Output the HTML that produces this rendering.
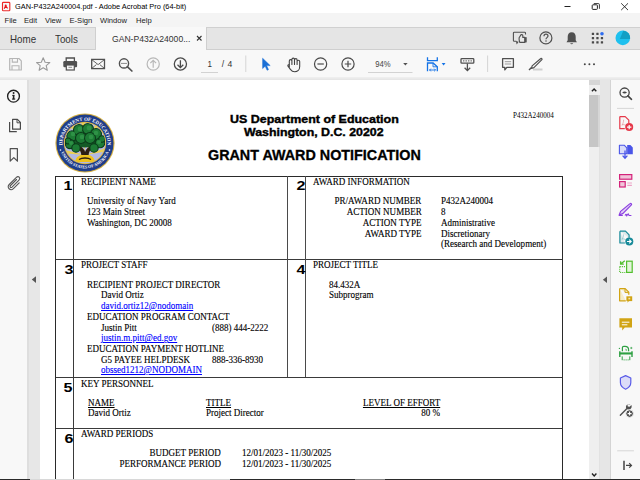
<!DOCTYPE html>
<html><head><meta charset="utf-8">
<style>
*{box-sizing:border-box}
html,body{margin:0;padding:0}
body{width:640px;height:480px;position:relative;overflow:hidden;background:#fff;font-family:"Liberation Sans",sans-serif;color:#222}
.a{position:absolute}
.t{position:absolute;white-space:pre;line-height:1}
.ui{font-family:"Liberation Sans",sans-serif;color:#2c2c2c}
.s{font-family:"Liberation Serif",serif;font-size:9.6px;color:#000;-webkit-text-stroke:0.12px currentColor;position:absolute;white-space:pre;line-height:1}
.num{font-family:"Liberation Sans",sans-serif;font-weight:bold;font-size:13.4px;transform-origin:100% 0;transform:scaleX(1.2);color:#000;position:absolute;line-height:1}
.lk{color:#0000ff;text-decoration:underline}
.ul{text-decoration:underline}
svg{position:absolute;overflow:visible}
</style></head>
<body>
<!-- title bar -->
<div class="a" style="left:0;top:0;width:640px;height:13px;background:#fff"></div>
<svg style="left:0;top:0" width="14" height="13"><rect x="2.5" y="2.4" width="7.3" height="8.3" rx="0.8" fill="#f6fbfb" stroke="#ec2a2a" stroke-width="1.15"/><circle cx="5.7" cy="5.5" r="1" fill="#e8141a"/><path d="M5.7 5.6L4.2 8.7 M5.8 6.2L7.6 8.3 M4.6 7.5h2.7" stroke="#e8141a" stroke-width="1.1" fill="none"/></svg>
<div class="t ui" style="left:15px;top:3px;font-size:7.4px;color:#000">GAN-P432A240004.pdf - Adobe Acrobat Pro (64-bit)</div>
<!-- menu bar -->
<div class="a" style="left:0;top:13px;width:640px;height:14px;background:#f4f4f4"></div>
<div class="t ui" style="left:4.5px;top:17px;font-size:7.6px;color:#1a1a1a">File</div>
<div class="t ui" style="left:24px;top:17px;font-size:7.6px;color:#1a1a1a">Edit</div>
<div class="t ui" style="left:45px;top:17px;font-size:7.6px;color:#1a1a1a">View</div>
<div class="t ui" style="left:69.5px;top:17px;font-size:7.6px;color:#1a1a1a">E-Sign</div>
<div class="t ui" style="left:100px;top:17px;font-size:7.6px;color:#1a1a1a">Window</div>
<div class="t ui" style="left:136px;top:17px;font-size:7.6px;color:#1a1a1a">Help</div>
<!-- tab bar -->
<div class="a" style="left:0;top:27px;width:640px;height:23px;background:#e5e5e5;border-top:1px solid #d0d0d0;border-bottom:1px solid #cfcfcf"></div>
<div class="a" style="left:95px;top:27px;width:112px;height:23px;background:#f8f8f8;border-left:1px solid #cfcfcf;border-right:1px solid #cfcfcf"></div>
<div class="t ui" style="left:10px;top:33.6px;font-size:9.8px;color:#333;transform-origin:0 0;transform:scaleY(1.14)">Home</div>
<div class="t ui" style="left:55px;top:33.6px;font-size:9.8px;color:#333;transform-origin:0 0;transform:scaleY(1.14)">Tools</div>
<div class="t ui" style="left:112px;top:35px;font-size:8.6px;color:#333">GAN-P432A24000...</div>
<svg style="left:0;top:0" width="640" height="50"><path d="M197 36l4.5 4.5M201.5 36l-4.5 4.5" stroke="#333" stroke-width="1.1"/></svg>
<!-- toolbar -->
<div class="a" style="left:0;top:50px;width:640px;height:29px;background:#f8f8f8"></div>
<div class="a" style="left:0;top:77px;width:640px;height:3px;background:linear-gradient(#f0f0f0,#e4e4e4)"></div>
<div class="t ui" style="left:207.6px;top:59.8px;font-size:8px;color:#333;transform-origin:0 0;transform:scaleY(1.15)">1</div>
<div class="t ui" style="left:221.8px;top:60.2px;font-size:8.6px;color:#333;word-spacing:1px">/ 4</div>
<div class="t ui" style="left:375.3px;top:59.6px;font-size:7.7px;color:#444;transform-origin:0 0;transform:scaleY(1.18)">94%</div>
<!-- content area -->
<div class="a" style="left:0;top:80px;width:27px;height:400px;background:#f8f8f8"></div>
<div class="a" style="left:27px;top:80px;width:13px;height:400px;background:#e7e7e7;border-left:2px solid #dedede"></div>
<div class="a" style="left:40px;top:80px;width:549px;height:400px;background:#fff"></div>
<!-- seal -->
<svg style="left:55px;top:112.5px" width="60" height="60" viewBox="-30 -30 60 60">
<defs>
<path id="arcT" d="M-22.3 4 A22.6 22.6 0 1 1 22.3 4"/>
<path id="arcB" d="M-25 5 A25.5 25.5 0 0 0 25 5"/>
<clipPath id="inner"><circle r="20.2"/></clipPath>
</defs>
<circle r="29.6" fill="#d6b042"/>
<circle r="28.5" fill="#1f3d8a"/>
<circle r="21.2" fill="#e0b83c"/>
<circle r="20.3" fill="#b3b9e2"/>
<g clip-path="url(#inner)">
<path d="M0 12 L-22 -7 L-21 -3 Z M0 12 L-15 -19 L-12 -20 Z M0 12 L-4 -24 L0 -24 Z M0 12 L11 -21 L14 -20 Z M0 12 L21 -9 L22 -5 Z M0 12 L-24 6 L-23 10 Z M0 12 L24 4 L24 8 Z" fill="#eccf52"/>
<path d="M-4 16 C-3 11 -4 7 -9 3 L-6 2 C-2 5 0 7 0 9 C1 6 3 4 7 2 L9 3 C4 7 3 11 4 16 Z" fill="#2e1d12"/>
<ellipse cx="0" cy="-5" rx="15" ry="9.5" fill="#145a26"/>
<g fill="#1d7b35" stroke="#0b3a1a" stroke-width="1.1">
<circle cx="-13" cy="-7" r="5.2"/><circle cx="-6" cy="-13" r="5.5"/><circle cx="3" cy="-14" r="5.5"/><circle cx="11" cy="-9" r="5.5"/>
<circle cx="-15" cy="1" r="4.6"/><circle cx="15" cy="0" r="4.8"/><circle cx="-9" cy="5" r="4.2"/><circle cx="9" cy="5" r="4.2"/>
<circle cx="-4" cy="-5" r="5.5"/><circle cx="5" cy="-5" r="5.5"/><circle cx="-17" cy="-2" r="3"/><circle cx="17" cy="-4" r="3.2"/>
</g>
<g fill="#2e9246"><circle cx="-12" cy="-9" r="2.2"/><circle cx="-5" cy="-14" r="2.4"/><circle cx="4" cy="-15" r="2.4"/><circle cx="11" cy="-10" r="2.3"/><circle cx="-14" cy="0" r="2"/><circle cx="14" cy="-1" r="2"/><circle cx="-3" cy="-6" r="2.3"/><circle cx="6" cy="-6" r="2.3"/></g>
<path d="M-10 19 C-9 14 -6 12 -3 12 L3 12 C6 12 9 14 10 19 Z" fill="#f0c21c"/>
<path d="M-6 16.5 C-3 14.5 3 14.5 6 16.5" stroke="#2e1d12" stroke-width="1.3" fill="none"/>
</g>
<text font-family="Liberation Serif" font-size="5" font-weight="bold" fill="#fff"><textPath href="#arcT" startOffset="50%" text-anchor="middle">DEPARTMENT OF EDUCATION</textPath></text>
<text font-family="Liberation Serif" font-size="4.2" font-weight="bold" fill="#fff"><textPath href="#arcB" startOffset="50%" text-anchor="middle">UNITED STATES OF AMERICA</textPath></text>
<circle cx="-24.5" cy="7" r="0.8" fill="#fff"/><circle cx="24.5" cy="7" r="0.8" fill="#fff"/>
</svg>
<!-- header -->
<div class="t" style="left:230px;top:114.5px;font-size:10px;font-weight:bold;color:#000;-webkit-text-stroke:0.35px #000;transform-origin:0 0;transform:scaleX(1.245)">US Department of Education</div>
<div class="t" style="left:244px;top:127.5px;font-size:10px;font-weight:bold;color:#000;-webkit-text-stroke:0.35px #000;transform-origin:0 0;transform:scaleX(1.235)">Washington, D.C. 20202</div>
<div class="t" style="left:208px;top:147.8px;font-size:14.35px;font-weight:bold;color:#000;-webkit-text-stroke:0.3px #000">GRANT AWARD NOTIFICATION</div>
<div class="t" style="left:512.5px;top:111.5px;font-size:7.6px;font-family:'Liberation Serif',serif;color:#000;transform-origin:0 0;transform:scaleX(0.93)">P432A240004</div>
<!-- table lines -->
<div class="a" style="left:55px;top:176px;width:508px;height:1px;background:#2a2a2a"></div>
<div class="a" style="left:55px;top:259px;width:508px;height:1px;background:#3a3a3a"></div>
<div class="a" style="left:55px;top:377px;width:508px;height:1px;background:#3a3a3a"></div>
<div class="a" style="left:55px;top:428px;width:508px;height:1px;background:#3a3a3a"></div>
<div class="a" style="left:55px;top:176px;width:1px;height:304px;background:#2a2a2a"></div>
<div class="a" style="left:73px;top:176px;width:1px;height:304px;background:#3a3a3a"></div>
<div class="a" style="left:287px;top:176px;width:1px;height:201px;background:#4a4a4a"></div>
<div class="a" style="left:305px;top:176px;width:1px;height:201px;background:#4a4a4a"></div>
<div class="a" style="left:562px;top:176px;width:1px;height:304px;background:#2a2a2a"></div>
<!--DOC-->
<div class="s" style="left:80.6px;top:177.2px;transform-origin:0 0;transform:scaleX(0.94)">RECIPIENT NAME</div>
<div class="s" style="left:87.4px;top:196.3px;transform-origin:0 0;transform:scaleX(0.94)">University of Navy Yard</div>
<div class="s" style="left:87.4px;top:207.2px;transform-origin:0 0;transform:scaleX(0.94)">123 Main Street</div>
<div class="s" style="left:87.4px;top:217.5px;transform-origin:0 0;transform:scaleX(0.94)">Washington, DC 20008</div>
<div class="s" style="left:312.5px;top:177.2px;transform-origin:0 0;transform:scaleX(0.94)">AWARD INFORMATION</div>
<div class="s" style="right:218.6px;top:196.3px;transform-origin:100% 0;transform:scaleX(0.94)">PR/AWARD NUMBER</div>
<div class="s" style="right:218.6px;top:207.2px;transform-origin:100% 0;transform:scaleX(0.94)">ACTION NUMBER</div>
<div class="s" style="right:218.6px;top:218.2px;transform-origin:100% 0;transform:scaleX(0.94)">ACTION TYPE</div>
<div class="s" style="right:218.6px;top:229.1px;transform-origin:100% 0;transform:scaleX(0.94)">AWARD TYPE</div>
<div class="s" style="left:441.4px;top:196.0px;transform-origin:0 0;transform:scaleX(0.94)">P432A240004</div>
<div class="s" style="left:441.4px;top:207.2px;transform-origin:0 0;transform:scaleX(0.94)">8</div>
<div class="s" style="left:441.4px;top:217.9px;transform-origin:0 0;transform:scaleX(0.94)">Administrative</div>
<div class="s" style="left:441.4px;top:228.7px;transform-origin:0 0;transform:scaleX(0.94)">Discretionary</div>
<div class="s" style="left:441.4px;top:238.7px;transform-origin:0 0;transform:scaleX(0.94)">(Research and Development)</div>
<div class="s" style="left:80.6px;top:260.1px;transform-origin:0 0;transform:scaleX(0.94)">PROJECT STAFF</div>
<div class="s" style="left:87.4px;top:279.8px;transform-origin:0 0;transform:scaleX(0.94)">RECIPIENT PROJECT DIRECTOR</div>
<div class="s" style="left:101.0px;top:290.1px;transform-origin:0 0;transform:scaleX(0.94)">David Ortiz</div>
<div class="s lk" style="left:101.0px;top:301.0px;transform-origin:0 0;transform:scaleX(0.94)">david.ortiz12@nodomain</div>
<div class="s" style="left:86.9px;top:312.1px;transform-origin:0 0;transform:scaleX(0.94)">EDUCATION PROGRAM CONTACT</div>
<div class="s" style="left:100.7px;top:322.6px;transform-origin:0 0;transform:scaleX(0.94)">Justin Pitt</div>
<div class="s" style="left:212.2px;top:322.6px;transform-origin:0 0;transform:scaleX(0.94)">(888) 444-2222</div>
<div class="s lk" style="left:100.7px;top:333.4px;transform-origin:0 0;transform:scaleX(0.94)">justin.m.pitt@ed.gov</div>
<div class="s" style="left:86.9px;top:344.2px;transform-origin:0 0;transform:scaleX(0.94)">EDUCATION PAYMENT HOTLINE</div>
<div class="s" style="left:100.7px;top:355.4px;transform-origin:0 0;transform:scaleX(0.94)">G5 PAYEE HELPDESK</div>
<div class="s" style="left:212.2px;top:355.4px;transform-origin:0 0;transform:scaleX(0.94)">888-336-8930</div>
<div class="s lk" style="left:100.7px;top:365.2px;transform-origin:0 0;transform:scaleX(0.94)">obssed1212@NODOMAIN</div>
<div class="s" style="left:312.5px;top:260.1px;transform-origin:0 0;transform:scaleX(0.94)">PROJECT TITLE</div>
<div class="s" style="left:328.8px;top:280.1px;transform-origin:0 0;transform:scaleX(0.94)">84.432A</div>
<div class="s" style="left:328.8px;top:289.9px;transform-origin:0 0;transform:scaleX(0.94)">Subprogram</div>
<div class="s" style="left:81.2px;top:378.6px;transform-origin:0 0;transform:scaleX(0.94)">KEY PERSONNEL</div>
<div class="s ul" style="left:88.1px;top:397.8px;transform-origin:0 0;transform:scaleX(0.94)">NAME</div>
<div class="s" style="left:88.1px;top:408.1px;transform-origin:0 0;transform:scaleX(0.94)">David Ortiz</div>
<div class="s ul" style="left:205.6px;top:397.8px;transform-origin:0 0;transform:scaleX(0.94)">TITLE</div>
<div class="s" style="left:205.6px;top:408.1px;transform-origin:0 0;transform:scaleX(0.94)">Project Director</div>
<div class="s ul" style="right:199.4px;top:397.8px;transform-origin:100% 0;transform:scaleX(0.94)">LEVEL OF EFFORT</div>
<div class="s" style="right:200.4px;top:408.1px;transform-origin:100% 0;transform:scaleX(0.94)">80 %</div>
<div class="s" style="left:81.2px;top:428.7px;transform-origin:0 0;transform:scaleX(0.94)">AWARD PERIODS</div>
<div class="s" style="right:419.4px;top:448.3px;transform-origin:100% 0;transform:scaleX(0.94)">BUDGET PERIOD</div>
<div class="s" style="right:419.4px;top:458.6px;transform-origin:100% 0;transform:scaleX(0.94)">PERFORMANCE PERIOD</div>
<div class="s" style="left:241.7px;top:448.3px;transform-origin:0 0;transform:scaleX(0.94)">12/01/2023 - 11/30/2025</div>
<div class="s" style="left:241.7px;top:458.6px;transform-origin:0 0;transform:scaleX(0.94)">12/01/2023 - 11/30/2025</div>
<div class="num" style="right:567.9px;top:179.0px">1</div>
<div class="num" style="right:334.6px;top:179.0px">2</div>
<div class="num" style="right:566.5px;top:263.0px">3</div>
<div class="num" style="right:334.3px;top:262.5px">4</div>
<div class="num" style="right:567.5px;top:381.2px">5</div>
<div class="num" style="right:567.0px;top:431.6px">6</div>
<!--/DOC-->
<!-- scrollbar -->
<div class="a" style="left:589px;top:80px;width:11px;height:400px;background:#efefef"></div>
<div class="a" style="left:589px;top:80px;width:11px;height:4.7px;background:#d6d6d6"></div>
<div class="a" style="left:589px;top:95px;width:9px;height:52px;background:#c6c6c6"></div>
<div class="a" style="left:598px;top:95px;width:2px;height:52px;background:#d6d6d6"></div>
<div class="a" style="left:599px;top:147px;width:1px;height:333px;background:#e2e2e2"></div>
<div class="a" style="left:600px;top:80px;width:11px;height:400px;background:#e6e6e6;border-right:1px solid #d4d4d4"></div>
<div class="a" style="left:611px;top:80px;width:29px;height:400px;background:#f8f8f8"></div>
<div class="a" style="left:0;top:479px;width:640px;height:1px;background:#2a2a2a"></div>
<div class="a" style="left:30px;top:479px;width:200px;height:1px;background:#d8d8d8"></div>
<div class="a" style="left:355px;top:479px;width:30px;height:1px;background:#888"></div>
<!-- icons -->
<svg style="left:0;top:0" width="640" height="480">
<!-- window controls -->
<path d="M564.5 6.5h6" stroke="#222" stroke-width="1"/>
<rect x="592.2" y="4.8" width="5.2" height="4.6" rx="0.8" fill="none" stroke="#222" stroke-width="1"/>
<path d="M593.8 3.6h4.6a1 1 0 0 1 1 1v4.2" fill="none" stroke="#222" stroke-width="0.9"/>
<path d="M621.2 3.3l6.8 6.8M628 3.3l-6.8 6.8" stroke="#222" stroke-width="0.9"/>
<!-- tab bar right -->
<path d="M516.4 41.3h-2.1c-0.5 0-0.9-0.4-0.9-0.9v-7.3c0-0.5 0.4-0.9 0.9-0.9h10.3c0.5 0 0.9 0.4 0.9 0.9v1.4" fill="none" stroke="#505050" stroke-width="1.1"/>
<path d="M515.8 41l0.9 3.6 2-2.8z" fill="#505050"/>
<path d="M519.1 37.7l2-3.1c0.8-0.3 1.7 0.3 1.7 1.1v1.7h2v5h-5.1c-0.4-1.5-0.8-3.1-0.6-4.7z" fill="#e8e8e8" stroke="#505050" stroke-width="1.1" stroke-linejoin="round"/>
<rect x="524.5" y="37.2" width="2.2" height="5.2" fill="#505050"/>
<circle cx="545.9" cy="37.9" r="6" fill="none" stroke="#505050" stroke-width="1.2"/>
<path d="M544 36.2c0-1.2 0.9-2 2-2s2 0.8 2 1.9c0 1.5-2 1.6-2 3.1" fill="none" stroke="#505050" stroke-width="1.2"/>
<circle cx="546" cy="41" r="0.75" fill="#505050"/>
<path d="M571.7 32.2c-2.6 0-4 2-4 4.5v3.5l-1.2 2h10.4l-1.2-2v-3.5c0-2.5-1.4-4.5-4-4.5z" fill="#505050"/>
<path d="M570.2 43.2a1.6 1.6 0 0 0 3 0z" fill="#505050"/>
<g fill="#4a4a4a"><rect x="591.8" y="32.7" width="2.3" height="2.3" rx="0.3"/><rect x="596.3" y="32.7" width="2.3" height="2.3" rx="0.3"/>
<rect x="591.8" y="37" width="2.3" height="2.3" rx="0.3"/><rect x="596.3" y="37" width="2.3" height="2.3" rx="0.3"/><rect x="600.8" y="37" width="2.3" height="2.3" rx="0.3"/>
<rect x="591.8" y="41.3" width="2.3" height="2.3" rx="0.3"/><rect x="596.3" y="41.3" width="2.3" height="2.3" rx="0.3"/><rect x="600.8" y="41.3" width="2.3" height="2.3" rx="0.3"/></g>
<circle cx="602" cy="33.8" r="1.8" fill="#2d6cf0"/>
<circle cx="622.8" cy="37.9" r="7.3" fill="#1ec0ee"/>
<path d="M619.8 38.9L623.3 30.7A7.3 7.3 0 0 1 630.1 38.9Z" fill="#129fc4"/>
<!-- toolbar -->
<path d="M9.7 58.5h9.2l2.4 2.4v9.1h-11.6z" fill="none" stroke="#b5b5b5" stroke-width="1.2" stroke-linejoin="round"/>
<path d="M12.3 58.5v3.6h5.2v-3.6 M12 70v-4.2h7v4.2" fill="none" stroke="#b5b5b5" stroke-width="1.1"/>
<path d="M43.2 57.8l1.9 4.4 4.7 0.4-3.6 3.1 1.1 4.6-4.1-2.5-4.1 2.5 1.1-4.6-3.6-3.1 4.7-0.4z" fill="none" stroke="#9a9a9a" stroke-width="1.1" stroke-linejoin="round"/>
<path d="M66.2 61.2v-3.2h8.2v3.2" fill="none" stroke="#505050" stroke-width="1.3"/>
<rect x="63.3" y="61" width="13.8" height="6.3" rx="1.2" fill="#505050"/>
<rect x="66.3" y="65" width="8" height="5" fill="#f8f8f8" stroke="#505050" stroke-width="1.2"/>
<path d="M68.5 67.3h3.6" stroke="#8a8a8a" stroke-width="1"/>
<rect x="91.7" y="59.4" width="12.8" height="9.2" fill="none" stroke="#505050" stroke-width="1.3"/>
<path d="M92 59.8l6.1 4.8 6.1-4.8 M92 68.2l4.4-3.6 M104.2 68.2l-4.4-3.6" fill="none" stroke="#505050" stroke-width="0.9"/>
<circle cx="124" cy="63.4" r="4.6" fill="none" stroke="#505050" stroke-width="1.4"/>
<path d="M127.3 66.7l4.6 4.3" stroke="#505050" stroke-width="1.7" stroke-linecap="round"/>
<g fill="#505050"><circle cx="122" cy="63.4" r="0.65"/><circle cx="124" cy="63.4" r="0.65"/><circle cx="126" cy="63.4" r="0.65"/></g>
<circle cx="153.2" cy="64" r="6.1" fill="none" stroke="#b8b8b8" stroke-width="1.2"/>
<path d="M153.2 67.8v-7 M150.3 63.2l2.9-2.9 2.9 2.9" fill="none" stroke="#b8b8b8" stroke-width="1.2"/>
<circle cx="180.4" cy="64" r="6.1" fill="none" stroke="#4a4a4a" stroke-width="1.3"/>
<path d="M180.4 60.2v7 M177.5 64.8l2.9 2.9 2.9-2.9" fill="none" stroke="#4a4a4a" stroke-width="1.3"/>
<path d="M201 72.5h17 M368 72.5h44.5" stroke="#c8c8c8" stroke-width="0.8"/>
<path d="M245.8 55.5v16.5 M487.6 55.5v16.5" stroke="#d0d0d0" stroke-width="0.9"/>
<path d="M262.6 58.2v10.4l2.6-2.4 1.9 4.1 1.4-0.7-1.9-4h3.6z" fill="#1a6fd6" stroke="#1a6fd6" stroke-width="0.5" stroke-linejoin="round"/>
<path d="M289.3 67.2V60.9a1.3 1.3 0 0 1 2.6 0V64.5V59.4a1.3 1.3 0 0 1 2.6 0V64.5V59.9a1.3 1.3 0 0 1 2.6 0V64.5V61.6a1.3 1.3 0 0 1 2.6 0V66.6c0 3-2.2 5.2-5 5.2c-2 0-3.2-0.9-4.3-2.4l-2.4-3.2c-0.6-0.9 0.5-1.9 1.3-1.2z" fill="none" stroke="#444" stroke-width="1.1" stroke-linejoin="round"/>
<circle cx="320.6" cy="64" r="6.1" fill="none" stroke="#4a4a4a" stroke-width="1.2"/>
<path d="M317.4 64h6.4" stroke="#4a4a4a" stroke-width="1.2"/>
<circle cx="348" cy="64" r="6.1" fill="none" stroke="#4a4a4a" stroke-width="1.2"/>
<path d="M344.8 64h6.4 M348 60.8v6.4" stroke="#4a4a4a" stroke-width="1.2"/>
<path d="M403.2 63l2.2 2.4 2.2-2.4z" fill="#505050"/>
<path d="M427.5 57.3v3.4h9.8v-3.4" fill="none" stroke="#1473e6" stroke-width="1.3"/>
<path d="M427.5 71.3v-8.3h5.6l4.2 3.8v4.5" fill="none" stroke="#1473e6" stroke-width="1.3"/>
<path d="M433 63v3.8h4.3" fill="none" stroke="#1473e6" stroke-width="0.9"/>
<path d="M429.5 70h6 M430.8 68.7l-1.3 1.3 1.3 1.3 M434.2 68.7l1.3 1.3-1.3 1.3" fill="none" stroke="#1473e6" stroke-width="0.9"/>
<path d="M441.7 63l1.9 2.6 1.9-2.6z" fill="#1473e6"/>
<rect x="461" y="58.6" width="12.8" height="4.6" rx="0.8" fill="none" stroke="#505050" stroke-width="1.3"/>
<path d="M463 60.9h1.4 M465.5 60.9h1.4 M468 60.9h1.4 M470.5 60.9h1.4" stroke="#505050" stroke-width="1"/>
<path d="M467.4 63.5v7 M464.6 67.8l2.8 2.8 2.8-2.8" fill="none" stroke="#505050" stroke-width="1.3"/>
<path d="M502.6 58.7h10.8v8.6h-6.6l-2 2.6v-2.6h-2.2z" fill="none" stroke="#505050" stroke-width="1.3" stroke-linejoin="round"/>
<path d="M504.8 61.7h6.4 M504.8 64h6.4" stroke="#9a9a9a" stroke-width="1"/>
<rect x="533" y="68.5" width="9.5" height="2" fill="#cfcfcf"/>
<path d="M540.8 58.5c0.6-0.6 1.7 0.5 1.1 1.1l-8 8.1-2.4 0.6 0.6-2.4z" fill="none" stroke="#505050" stroke-width="1.2" stroke-linejoin="round"/>
<path d="M531.5 67.5l-2.5 2.4" stroke="#505050" stroke-width="1.4"/>
<g fill="#444"><circle cx="584.8" cy="64.2" r="1"/><circle cx="589.4" cy="64.2" r="1"/><circle cx="594" cy="64.2" r="1"/></g>
<!-- left nav icons -->
<circle cx="13.5" cy="96.2" r="5.9" fill="none" stroke="#222" stroke-width="1.35"/>
<g fill="#222"><rect x="12.8" y="94.9" width="1.6" height="4.4"/><rect x="12" y="98.5" width="3.2" height="1.1"/><rect x="12.2" y="94.9" width="2.2" height="0.9"/><circle cx="13.6" cy="93" r="0.95"/></g>
<path d="M9.6 122v9.6h7.2" fill="none" stroke="#4a4a4a" stroke-width="1.2"/>
<path d="M12.6 119.4h4.8l3 3v6.8h-7.8z" fill="none" stroke="#4a4a4a" stroke-width="1.2" stroke-linejoin="round"/>
<path d="M17 119.6v3.2h3.2" fill="none" stroke="#4a4a4a" stroke-width="1"/>
<path d="M10.2 148.6h7.2v12.6l-3.6-3.6-3.6 3.6z" fill="none" stroke="#505050" stroke-width="1.2" stroke-linejoin="round"/>
<path d="M16.5 181.5l-6 6c-1.2 1.2 0.2 2.8 1.5 1.6l7-7c2-2-0.6-4.8-2.6-2.8l-7.2 7.2c-3 3 1.3 7 4.2 4.1l5.8-5.8" fill="none" stroke="#555" stroke-width="1.1" stroke-linecap="round" transform="translate(0 -2)"/>
<path d="M36 276.3v6.6l-4.2-3.3z" fill="#555"/>
<!-- scrollbar arrows -->
<path d="M591.9 91.3l2.2-2.3 2.2 2.3" fill="none" stroke="#222" stroke-width="1.4"/>
<path d="M592 473.6l2.2 2.3 2.2-2.3" fill="none" stroke="#222" stroke-width="1.4"/>
<path d="M607 276.4v6.7l-4.1-3.4z" fill="#555"/>
<!-- right tool icons -->
<circle cx="624.6" cy="92.6" r="4.6" fill="none" stroke="#444" stroke-width="1.3"/>
<path d="M627.9 95.9l3.6 3.4" stroke="#444" stroke-width="1.6" stroke-linecap="round"/>
<path d="M622.2 92.6q2.4-2 4.8 0q-2.4 2-4.8 0z" fill="#444"/>
<path d="M617 108.4h17" stroke="#d6d6d6" stroke-width="1"/>
<path d="M619.8 116.6h5.4l3.6 3.6v3" fill="none" stroke="#e5394a" stroke-width="1.2" stroke-linejoin="round"/>
<path d="M619.8 116.6v12.1h5" fill="none" stroke="#e5394a" stroke-width="1.2"/>
<path d="M622 125.5c1-1.8 1.6-3.8 1.6-5.8 M621.8 124.6c1.8-0.2 3.4 0.2 4.6 1" fill="none" stroke="#e8a0a6" stroke-width="0.8"/>
<circle cx="629.2" cy="127.1" r="4" fill="#e5394a"/>
<path d="M629.2 124.9v4.4 M627 127.1h4.4" stroke="#fff" stroke-width="1.2"/>
<path d="M619.4 145.2h4.8l2.6 2.6v5.9h-7.4z" fill="#d9dcfa" stroke="#4a55e8" stroke-width="1.1" stroke-linejoin="round"/>
<path d="M627.2 145h3.2l2.4 2.4v6.8h-5.6z" fill="#4a55e8"/>
<path d="M625 150.5v7.5 M622.6 155.6l2.4 2.6 2.4-2.6" fill="none" stroke="#4a55e8" stroke-width="1.3"/>
<rect x="619.6" y="174.6" width="12.2" height="4.6" fill="#f1c4da" stroke="#d4237a" stroke-width="1.2"/>
<rect x="619.6" y="181.6" width="5.6" height="5.4" fill="#f1c4da" stroke="#d4237a" stroke-width="1.2"/>
<path d="M627.3 183h4.6 M627.3 185.4h4.6" stroke="#eba3c6" stroke-width="1.2"/>
<path d="M630 203.6c0.7-0.7 2.1 0.6 1.4 1.3l-8.6 8.7-3.6 1.4 1.4-3.6z" fill="#e0cdf7" stroke="#8b3fe0" stroke-width="1.2" stroke-linejoin="round"/>
<path d="M618.8 215.5h4 M625 215.5c1-1.5 1.6-1.5 1.6 0s1-1.8 1.6-1.8 0 1.8 1.2 1.8h2" fill="none" stroke="#8b3fe0" stroke-width="1.1"/>
<path d="M619.9 231.2h5.6l3.6 3.6v3 M619.9 231.2v11.8h5" fill="#dde8ea" stroke="#178a99" stroke-width="1.2" stroke-linejoin="round"/>
<path d="M622 239.5c1-1.6 1.4-3.2 1.4-5 M621.8 238.8c1.4-0.2 2.8 0.2 3.8 0.8" fill="none" stroke="#8cc4cc" stroke-width="0.8"/>
<circle cx="629.3" cy="241.5" r="4" fill="#178a99"/>
<path d="M627 241.5h3.6 M629.2 239.6l2 1.9-2 1.9" fill="none" stroke="#fff" stroke-width="1.1"/>
<rect x="626.6" y="261.2" width="5.6" height="11.2" fill="#e3f4da" stroke="#52bf2e" stroke-width="1.2"/>
<path d="M619.7 266.6v5.9h5.6 M619.7 266.6h5.6" fill="none" stroke="#52bf2e" stroke-width="1.1" stroke-dasharray="1.1 1"/>
<path d="M624.8 260.8l-3.8 3 M620.6 261.2v2.9h3.2" fill="none" stroke="#52bf2e" stroke-width="1.3"/>
<path d="M619.6 288.6h5.6l3.6 3.6v2.6 M619.6 288.6v12.2h6.2" fill="#f5ecc8" stroke="#d1a414" stroke-width="1.2" stroke-linejoin="round"/>
<path d="M625 288.8v3.6h3.6" fill="none" stroke="#d1a414" stroke-width="1"/>
<rect x="626.4" y="296.3" width="5.8" height="4.8" fill="#d1a414"/>
<path d="M627.6 301l-0.2 1.8 1.6-1.8z" fill="#d1a414"/>
<rect x="628.4" y="297.8" width="1.8" height="1.6" fill="#f5e6a8"/>
<path d="M619.4 318.2h12.6v9.2h-7.2l-2.6 3v-3h-2.8z" fill="#d1a414"/>
<path d="M621.8 322.2h7.6 M621.8 324.8h5.6" stroke="#fff" stroke-width="1"/>
<path d="M622.4 351.2v-3.6c0-0.8 0.6-1.3 1.4-1.3h1.2c2 0 3.6 1.6 3.6 3.6v1.3" fill="none" stroke="#2ea043" stroke-width="1.2"/>
<path d="M625.6 348.4l1.8 2h-1.8z" fill="#2ea043"/>
<path d="M619.8 351.2v5.8 M632 351.2v5.8" stroke="#2ea043" stroke-width="1.4"/>
<rect x="619.6" y="352.4" width="12.6" height="2.1" fill="#2ea043"/>
<path d="M622.2 356.4v3.8 M629.8 356.4v3.8 M623.6 359.9h1 M625.6 359.9h1 M627.6 359.9h1" stroke="#2ea043" stroke-width="1"/>
<circle cx="619.4" cy="348.4" r="0.65" fill="#2ea043"/><path d="M631.3 346.9v2.2 M630.2 348h2.2" stroke="#2ea043" stroke-width="0.7"/>
<path d="M625.6 375.6l5.2 2.4v4.6c0 3-2.2 5.4-5.2 6.6-3-1.2-5.2-3.6-5.2-6.6v-4.6z" fill="#dcdcf8" stroke="#5a5ce8" stroke-width="1.2" stroke-linejoin="round"/>
<path d="M630.5 404.2c-1.8-0.8-3.8 0-4.4 1.8-0.3 0.8-0.2 1.6 0.1 2.3l-6.4 6.4c-0.6 0.6 0.4 1.6 1 1l6.4-6.4c0.8 0.3 1.6 0.4 2.4 0.1 1.8-0.6 2.6-2.6 1.8-4.4l-1.8 1.8-1.8-0.4-0.4-1.8z" fill="#505050"/>
<circle cx="629.6" cy="413.6" r="3.8" fill="#505050" stroke="#f8f8f8" stroke-width="0.9"/>
<path d="M629.6 411.6v4 M627.6 413.6h4" stroke="#fff" stroke-width="1.1"/>
<path d="M617.2 450.8h16.7" stroke="#d6d6d6" stroke-width="1"/>
<path d="M624 460.8v9.3" stroke="#444" stroke-width="1.5"/>
<path d="M626 465.4h5.4 M629.2 463.1l2.3 2.3-2.3 2.3" fill="none" stroke="#444" stroke-width="1.2"/>
</svg>

</body></html>
